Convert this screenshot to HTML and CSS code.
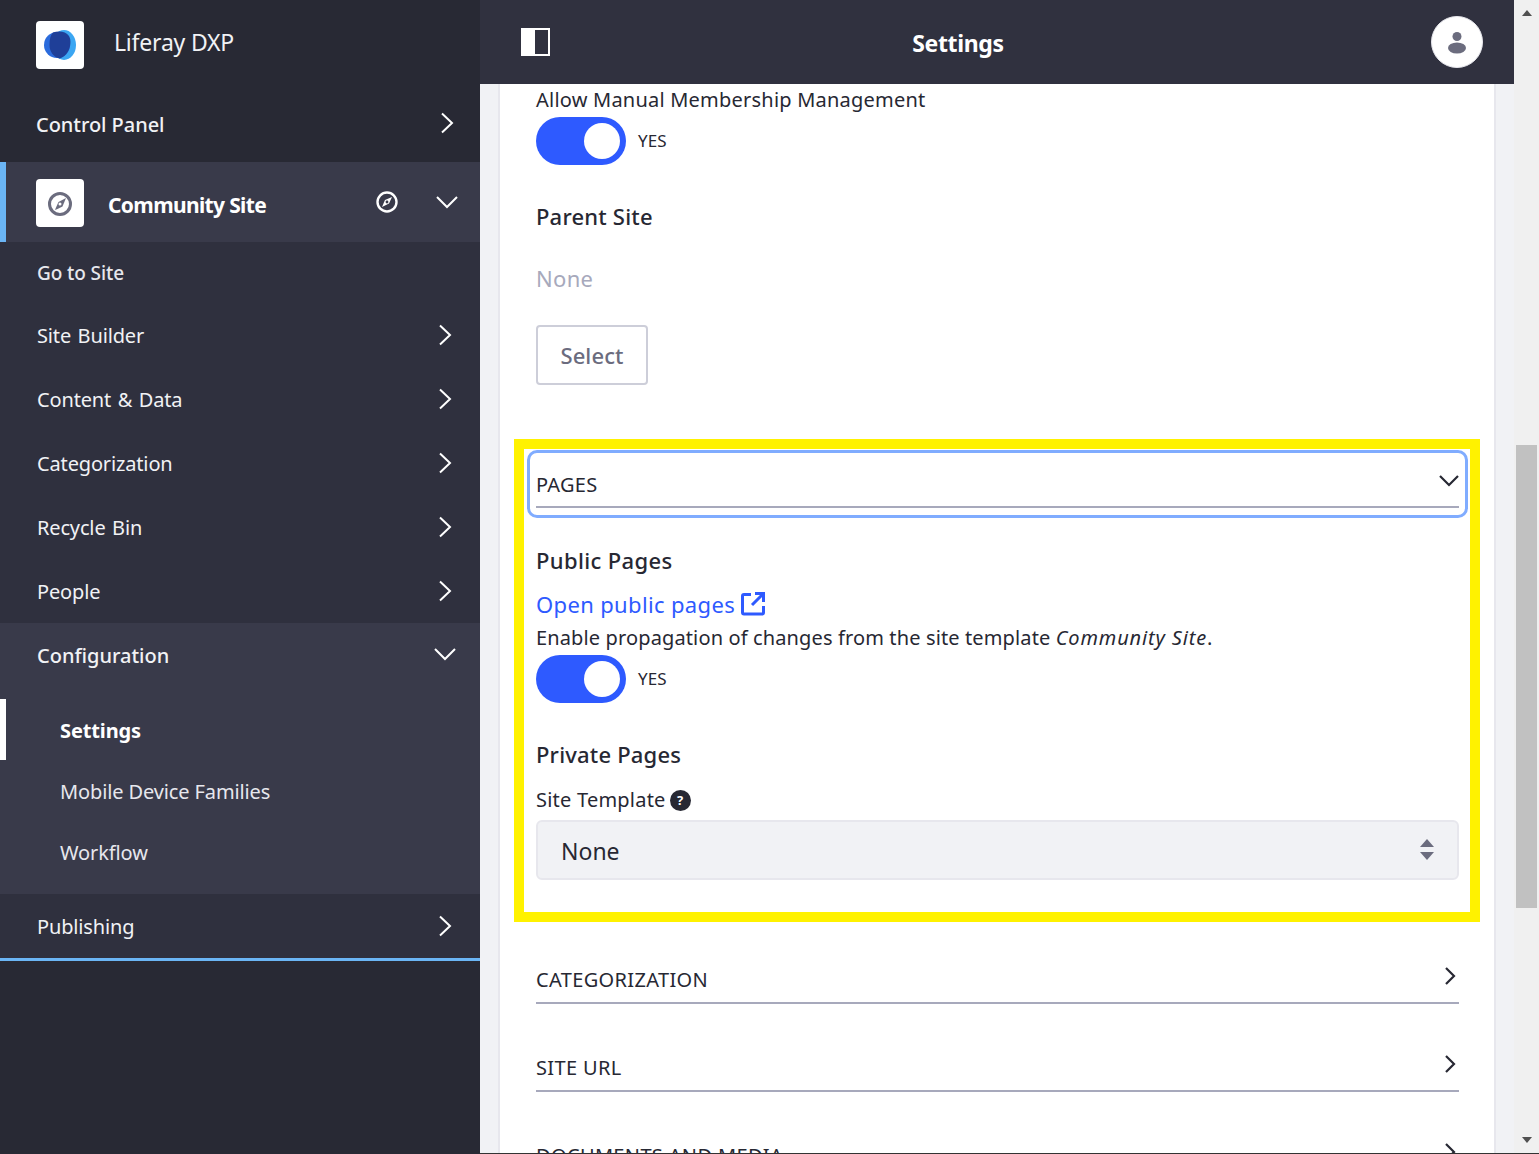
FILE: index.html
```html
<!DOCTYPE html>
<html lang="en">
<head>
<meta charset="UTF-8">
<title>Settings - Liferay DXP</title>
<link rel="stylesheet" href="styles.css">
</head>
<body>

<aside class="sidebar">
    <div class="brand">
        <span class="tile">
            <svg width="48" height="48" viewBox="0 0 48 48">
                <ellipse cx="28" cy="24" rx="12" ry="15" fill="#3ba6f2"/>
                <ellipse cx="21" cy="24" rx="13" ry="13" fill="#2b6bdc"/>
                <path d="M17 11.6c6-2 13-1 16 3.400 2.500 4 1.600 11-1 15.500-2 3.500-5 6-8.500 7-6-1.500-10-7-10-13.500 0-5.500 1-10 3.500-12.400z" fill="#1f3f98"/>
            </svg>
        </span>
        <span class="brand-name">Liferay DXP</span>
    </div>
    <div class="control-panel">
        <span class="control-label">Control Panel</span>
        <svg class="chev chev-cp" viewBox="0 0 14 22"><path d="M2 1.500 12 11 2 20.500"/></svg>
    </div>
    <div class="site-row">
        <span class="tile">
            <svg width="48" height="48" viewBox="0 0 48 48">
                <circle cx="24" cy="25" r="10.500" fill="none" stroke="#6b6c7e" stroke-width="3"/>
                <path d="M30 19l-3.500 8.500-5 2.500-2.500 1 1-2.500 2.500-5.500z" fill="#6b6c7e"/>
                <circle cx="24" cy="25" r="1.500" fill="#fff"/>
            </svg>
        </span>
        <span class="site-name">Community Site</span>
        <svg class="site-compass" width="24" height="24" viewBox="0 0 24 24">
            <circle cx="12" cy="12" r="9.500" fill="none" stroke="#fff" stroke-width="2.400"/>
            <path d="M17 7l-3 6.500-7 3.500 3-7z" fill="#fff"/>
            <circle cx="12" cy="12" r="1.400" fill="#393a4a"/>
        </svg>
        <svg class="chev-down chev-site" viewBox="0 0 22 14"><path d="M1 2l10 10L21 2"/></svg>
    </div>

    <nav class="nav">
        <a class="nav-goto">Go to Site</a>
        <a class="nav-item">Site Builder <svg class="chev" viewBox="0 0 14 22"><path d="M2 1.500 12 11 2 20.500"/></svg></a>
        <a class="nav-item">Content &amp; Data <svg class="chev" viewBox="0 0 14 22"><path d="M2 1.500 12 11 2 20.500"/></svg></a>
        <a class="nav-item">Categorization <svg class="chev" viewBox="0 0 14 22"><path d="M2 1.500 12 11 2 20.500"/></svg></a>
        <a class="nav-item">Recycle Bin <svg class="chev" viewBox="0 0 14 22"><path d="M2 1.500 12 11 2 20.500"/></svg></a>
        <a class="nav-item">People <svg class="chev" viewBox="0 0 14 22"><path d="M2 1.500 12 11 2 20.500"/></svg></a>
        <div class="nav-open">
            <a class="nav-item nav-item-open">Configuration <svg class="chev-down" viewBox="0 0 22 14"><path d="M1 2l10 10L21 2"/></svg></a>
            <a class="sub-item sub-active">Settings</a>
            <a class="sub-item">Mobile Device Families</a>
            <a class="sub-item">Workflow</a>
        </div>
        <a class="nav-item nav-last">Publishing <svg class="chev" viewBox="0 0 14 22"><path d="M2 1.500 12 11 2 20.500"/></svg></a>
    </nav>
</aside>

<div class="page">
    <header class="topbar">
        <svg class="panel-icon" width="29" height="28" viewBox="0 0 29 28">
            <rect x="1" y="1" width="27" height="26" fill="none" stroke="#fff" stroke-width="2"/>
            <rect x="1" y="1" width="13" height="26" fill="#fff"/>
        </svg>
        <h1 class="topbar-title">Settings</h1>
        <span class="avatar">
            <svg width="24" height="24" viewBox="0 0 24 24">
                <circle cx="12" cy="6.500" r="4.500" fill="#6b6c7e"/>
                <ellipse cx="12" cy="18" rx="9" ry="5.500" fill="#6b6c7e"/>
            </svg>
        </span>
    </header>

    <main class="content">
        <div class="card">
            <div class="field-label first-label">Allow Manual Membership Management</div>
            <div class="toggle-row">
                <span class="toggle"><span class="knob"></span></span>
                <span class="toggle-text">YES</span>
            </div>
            <h3 class="sub-head parent-head">Parent Site</h3>
            <p class="none-text">None</p>
            <button class="select-btn" type="button">Select</button>

            <section class="marked">
                <div class="focus-ring">
                    <div class="panel-head panel-head-open">
                        <span>PAGES</span>
                        <svg class="panel-chev-down" viewBox="0 0 20 13"><path d="M1 2l9 9 9-9"/></svg>
                    </div>
                </div>
                <h3 class="sub-head public-head">Public Pages</h3>
                <a class="page-link">Open public pages
                    <svg width="24" height="24" viewBox="0 0 24 24" fill="none" stroke="#2e5aff" stroke-width="3">
                        <path d="M10 2.500H3a1.500 1.500 0 0 0-1.500 1.500v16.500A1.500 1.500 0 0 0 3 22h18a1.500 1.500 0 0 0 1.500-1.500V14"/>
                        <path d="M11 13 21 3"/>
                        <path d="M14 1.500h8.500V10"/>
                    </svg>
                </a>
                <div class="field-label enable-label">Enable propagation of changes from the site template <em>Community Site</em>.</div>
                <div class="toggle-row">
                    <span class="toggle"><span class="knob"></span></span>
                    <span class="toggle-text">YES</span>
                </div>
                <h3 class="sub-head private-head">Private Pages</h3>
                <div class="field-label template-label">Site Template <span class="help">?</span></div>
                <div class="fake-select">
                    <span>None</span>
                    <svg width="16" height="22" viewBox="0 0 16 22" fill="#6b6c7e">
                        <path d="M8 0l7 8H1z"/>
                        <path d="M1 13h14l-7 8z"/>
                    </svg>
                </div>
            </section>

            <div class="panel-head panel-closed first-closed">
                <span>CATEGORIZATION</span>
                <svg class="panel-chev" viewBox="0 0 13 20"><path d="M2 2l8 8-8 8"/></svg>
            </div>
            <div class="panel-head panel-closed">
                <span>SITE URL</span>
                <svg class="panel-chev" viewBox="0 0 13 20"><path d="M2 2l8 8-8 8"/></svg>
            </div>
            <div class="panel-head panel-closed">
                <span>DOCUMENTS AND MEDIA</span>
                <svg class="panel-chev" viewBox="0 0 13 20"><path d="M2 2l8 8-8 8"/></svg>
            </div>
        </div>
    </main>
</div>

<div class="scrollbar">
    <span class="arrow-up"></span>
    <div class="scroll-track"><div class="scroll-thumb"></div></div>
    <span class="arrow-down"></span>
</div>

</body>
</html>
```

FILE: styles.css
```css
* {
    box-sizing: border-box;
}

html,
body {
    height: 100%;
}

body {
    margin: 0;
    height: 1154px;
    overflow: hidden;
    display: grid;
    grid-template-columns: 480px 1034px 25px;
    font-family: "Noto Sans", Arial, sans-serif;
    color: #272833;
    background-color: #fff;
}

/* sidebar */

.sidebar {
    background-color: #282934;
    height: 1154px;
    color: #fff;
}

.brand {
    height: 84px;
    display: flex;
    align-items: center;
    padding: 6px 36px 0;
}

.tile {
    width: 48px;
    height: 48px;
    flex: none;
    background-color: #fff;
    border-radius: 4px;
    display: block;
}

.tile svg {
    display: block;
}

.brand-name {
    margin-left: 30px;
    margin-top: -7px;
    font-size: 23px;
    letter-spacing: -0.2px;
    color: #f1f2f5;
}

.control-panel {
    height: 78px;
    display: flex;
    align-items: center;
    justify-content: space-between;
    padding: 2px 26px 0 36px;
}

.control-label {
    font-size: 20px;
    font-weight: 500;
    letter-spacing: -0.05px;
    color: #f1f2f5;
}

.chev {
    width: 14px;
    height: 22px;
    flex: none;
    fill: none;
    stroke: #fff;
    stroke-width: 2;
}

.chev-cp {
    margin-top: -2px;
}

.chev-down {
    width: 22px;
    height: 14px;
    flex: none;
    fill: none;
    stroke: #fff;
    stroke-width: 2;
}

.site-row {
    height: 80px;
    background-color: #393a4a;
    padding: 2px 22px 0 30px;
    border-left: 6px solid #6bb5f5;
    display: flex;
    align-items: center;
    box-shadow: inset 0 2px 0 #393a4a;
}

.site-name {
    margin-left: 24px;
    margin-top: 3px;
    font-size: 21px;
    font-weight: 700;
    letter-spacing: -0.65px;
}

.site-compass {
    margin-left: auto;
    margin-top: -2px;
}

.chev-site {
    margin-left: 37px;
    margin-top: -2px;
}

.nav {
    background-color: #2f303e;
    border-bottom: 3px solid #6bb5f5;
}

.nav a {
    display: flex;
    align-items: center;
}

.nav-goto {
    height: 61px;
    padding-left: 37px;
    font-size: 19px;
    font-weight: 500;
    letter-spacing: -0.1px;
    color: #e7e7ed;
}

.nav-item {
    height: 64px;
    padding: 0 28px 0 37px;
    justify-content: space-between;
    font-size: 20px;
    letter-spacing: -0.15px;
    word-spacing: 1.5px;
    color: #f1f2f5;
}

.nav-open {
    height: 271px;
    background-color: #393a4a;
}

.nav-item-open {
    font-weight: 500;
    letter-spacing: 0;
    padding-right: 24px;
}

.nav-item-open .chev-down {
    margin-top: -3px;
}

.nav-open .nav-item {
    margin-bottom: 12px;
}

.sub-item {
    height: 61px;
    padding: 2px 0 0 60px;
    font-size: 20px;
    letter-spacing: -0.12px;
    color: #e7e7ed;
}

.sub-active {
    border-left: 6px solid #fff;
    padding-left: 54px;
    font-weight: 700;
    color: #fff;
}

/* top bar */

.page {
    height: 1154px;
    display: flex;
    flex-direction: column;
    overflow: hidden;
    border-bottom: 1px solid #333;
}

.topbar {
    height: 84px;
    flex: none;
    background-color: #30313f;
    display: flex;
    align-items: center;
    padding: 0 31px 0 41px;
    color: #fff;
}

.panel-icon {
    flex: none;
}

.topbar-title {
    flex: 1;
    margin: 0;
    padding: 2px 65px 0 0;
    text-align: center;
    font-size: 23px;
    font-weight: 700;
    letter-spacing: -0.35px;
}

.avatar {
    width: 52px;
    height: 52px;
    border-radius: 50%;
    background-color: #fff;
    border: 1px solid #e7e7ed;
    display: flex;
    align-items: center;
    justify-content: center;
}

/* card */

.content {
    flex: 1;
    min-height: 0;
    overflow: hidden;
    background-color: #f1f2f5;
    padding: 0 20px 0 18px;
}

.card {
    background-color: #fff;
    border-left: 2px solid #e7e7ed;
    border-right: 2px solid #e7e7ed;
    height: 100%;
    margin-right: -2px;
    padding: 0 35px 0 36px;
}

.field-label {
    font-size: 20px;
    line-height: 30px;
    letter-spacing: 0.22px;
}

.first-label {
    padding-top: 1px;
}

.toggle-row {
    display: flex;
    align-items: center;
    margin-top: 2px;
}

.toggle {
    width: 90px;
    height: 48px;
    border-radius: 24px;
    background-color: #2e5aff;
    padding: 6px;
    display: flex;
    justify-content: flex-end;
}

.knob {
    width: 36px;
    height: 36px;
    border-radius: 50%;
    background-color: #fff;
}

.toggle-text {
    margin-left: 12px;
    margin-top: -1px;
    font-size: 17px;
    letter-spacing: 0.1px;
}

.sub-head {
    margin: 0;
    font-size: 22px;
    font-weight: 500;
    line-height: 30px;
    letter-spacing: 0.2px;
}

.parent-head {
    margin-top: 36px;
}

.none-text {
    margin: 30px 0 0;
    font-size: 22px;
    line-height: 34px;
    letter-spacing: 0.3px;
    color: #a7a9bc;
}

.select-btn {
    display: block;
    margin-top: 30px;
    width: 112px;
    height: 60px;
    background-color: #fff;
    border: 2px solid #cdced9;
    border-radius: 4px;
    font-family: inherit;
    font-size: 22px;
    font-weight: 500;
    letter-spacing: 0.1px;
    color: #6b6c7e;
}

/* yellow marked section */

.marked {
    margin: 54px -21px 0 -22px;
    height: 483px;
    border: 10px solid #fff200;
    padding: 1px 11px 0 12px;
}

.focus-ring {
    margin: 0 -9px 0 -9px;
    height: 68px;
    border: 3px solid #80acff;
    border-radius: 10px;
    padding: 0 6px 0 6px;
}

.panel-head {
    display: flex;
    justify-content: space-between;
    align-items: center;
    font-size: 20px;
    letter-spacing: 0.25px;
    border-bottom: 2px solid #a7a9bc;
}

.panel-head-open {
    height: 55px;
    padding-top: 9px;
}

.panel-chev-down {
    width: 20px;
    height: 13px;
    margin-top: -7px;
    fill: none;
    stroke: #272833;
    stroke-width: 2.200;
}

.panel-chev {
    width: 13px;
    height: 20px;
    margin-right: 2px;
    margin-top: -7px;
    fill: none;
    stroke: #272833;
    stroke-width: 2.200;
}

.public-head {
    margin-top: 27px;
    letter-spacing: 0.35px;
}

.page-link {
    display: flex;
    align-items: center;
    gap: 6px;
    margin-top: 14px;
    height: 30px;
    font-size: 22px;
    letter-spacing: 0.35px;
    color: #2e5aff;
}

.page-link svg {
    flex: none;
}

.enable-label {
    margin-top: 4px;
    letter-spacing: 0.13px;
}

.enable-label em {
    letter-spacing: 0.85px;
}

.private-head {
    margin-top: 36px;
}

.template-label {
    margin-top: 16px;
    display: flex;
    align-items: center;
    gap: 4px;
}

.help {
    width: 21px;
    height: 21px;
    border-radius: 50%;
    background-color: #272833;
    color: #fff;
    font-size: 13px;
    font-weight: 700;
    line-height: 21px;
    text-align: center;
    letter-spacing: 0;
}

.fake-select {
    margin-top: 5px;
    height: 60px;
    background-color: #f1f2f5;
    border: 2px solid #e7e7ed;
    border-radius: 6px;
    padding: 1px 22px 0 23px;
    display: flex;
    align-items: center;
    justify-content: space-between;
    font-size: 23px;
}

.fake-select svg {
    margin-top: -2px;
}

.panel-closed {
    height: 40px;
    margin-bottom: 48px;
    padding-bottom: 8px;
    letter-spacing: 0.35px;
}

.first-closed {
    margin-top: 42px;
}

/* scrollbar */

.scrollbar {
    background-color: #f0f0f0;
    height: 1154px;
    display: flex;
    flex-direction: column;
    align-items: center;
    border-bottom: 1px solid #333;
}

.arrow-up {
    margin-top: 10px;
    border-left: 5.500px solid transparent;
    border-right: 5.500px solid transparent;
    border-bottom: 6px solid #505050;
}

.arrow-down {
    margin-bottom: 10px;
    border-left: 5.500px solid transparent;
    border-right: 5.500px solid transparent;
    border-top: 6px solid #505050;
}

.scroll-track {
    flex: 1;
    width: 21px;
    padding-top: 429px;
}

.scroll-thumb {
    height: 463px;
    background-color: #c1c1c1;
}
```
